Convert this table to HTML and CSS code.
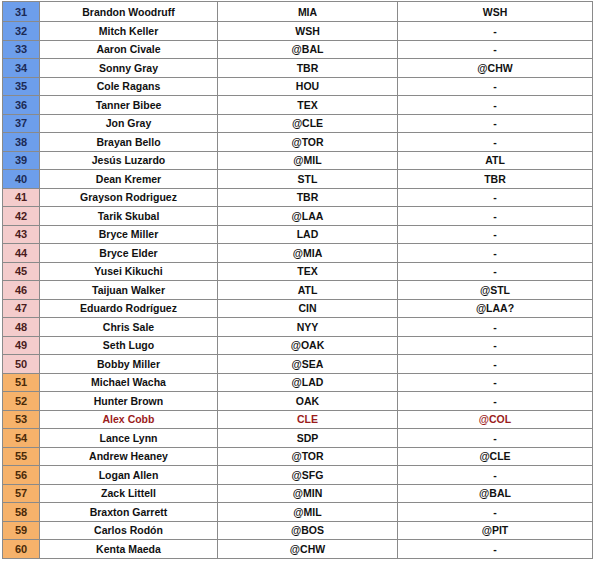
FILE: index.html
```html
<!DOCTYPE html>
<html>
<head>
<meta charset="utf-8">
<link rel="stylesheet" href="styles.css">
</head>
<body>
<table class="grid">
<colgroup><col class="c1"><col class="c2"><col class="c3"><col class="c4"></colgroup>
<tbody>
<tr class="first"><td class="n blue">31</td><td>Brandon Woodruff</td><td>MIA</td><td>WSH</td></tr>
<tr><td class="n blue">32</td><td>Mitch Keller</td><td>WSH</td><td>-</td></tr>
<tr><td class="n blue">33</td><td>Aaron Civale</td><td>@BAL</td><td>-</td></tr>
<tr><td class="n blue">34</td><td>Sonny Gray</td><td>TBR</td><td>@CHW</td></tr>
<tr><td class="n blue">35</td><td>Cole Ragans</td><td>HOU</td><td>-</td></tr>
<tr><td class="n blue">36</td><td>Tanner Bibee</td><td>TEX</td><td>-</td></tr>
<tr><td class="n blue">37</td><td>Jon Gray</td><td>@CLE</td><td>-</td></tr>
<tr><td class="n blue">38</td><td>Brayan Bello</td><td>@TOR</td><td>-</td></tr>
<tr><td class="n blue">39</td><td>Jesús Luzardo</td><td>@MIL</td><td>ATL</td></tr>
<tr><td class="n blue">40</td><td>Dean Kremer</td><td>STL</td><td>TBR</td></tr>
<tr><td class="n pink">41</td><td>Grayson Rodriguez</td><td>TBR</td><td>-</td></tr>
<tr><td class="n pink">42</td><td>Tarik Skubal</td><td>@LAA</td><td>-</td></tr>
<tr><td class="n pink">43</td><td>Bryce Miller</td><td>LAD</td><td>-</td></tr>
<tr><td class="n pink">44</td><td>Bryce Elder</td><td>@MIA</td><td>-</td></tr>
<tr><td class="n pink">45</td><td>Yusei Kikuchi</td><td>TEX</td><td>-</td></tr>
<tr><td class="n pink">46</td><td>Taijuan Walker</td><td>ATL</td><td>@STL</td></tr>
<tr><td class="n pink">47</td><td>Eduardo Rodríguez</td><td>CIN</td><td>@LAA?</td></tr>
<tr><td class="n pink">48</td><td>Chris Sale</td><td>NYY</td><td>-</td></tr>
<tr><td class="n pink">49</td><td>Seth Lugo</td><td>@OAK</td><td>-</td></tr>
<tr><td class="n pink">50</td><td>Bobby Miller</td><td>@SEA</td><td>-</td></tr>
<tr><td class="n orange">51</td><td>Michael Wacha</td><td>@LAD</td><td>-</td></tr>
<tr><td class="n orange">52</td><td>Hunter Brown</td><td>OAK</td><td>-</td></tr>
<tr class="red"><td class="n orange">53</td><td>Alex Cobb</td><td>CLE</td><td>@COL</td></tr>
<tr><td class="n orange">54</td><td>Lance Lynn</td><td>SDP</td><td>-</td></tr>
<tr><td class="n orange">55</td><td>Andrew Heaney</td><td>@TOR</td><td>@CLE</td></tr>
<tr><td class="n orange">56</td><td>Logan Allen</td><td>@SFG</td><td>-</td></tr>
<tr><td class="n orange">57</td><td>Zack Littell</td><td>@MIN</td><td>@BAL</td></tr>
<tr><td class="n orange">58</td><td>Braxton Garrett</td><td>@MIL</td><td>-</td></tr>
<tr><td class="n orange">59</td><td>Carlos Rodón</td><td>@BOS</td><td>@PIT</td></tr>
<tr><td class="n orange">60</td><td>Kenta Maeda</td><td>@CHW</td><td>-</td></tr>
</tbody>
</table>
</body>
</html>
```
FILE: styles.css
```css
html, body {
  margin: 0;
  padding: 0;
  background: #ffffff;
}
body {
  padding: 1px 0 0 2px;
}
.grid {
  border-collapse: collapse;
  table-layout: fixed;
  width: 590px;
  font-family: "Liberation Sans", Arial, sans-serif;
  font-weight: bold;
  font-size: 10.5px;
  color: #111111;
}
.c1 { width: 37px; }
.c2 { width: 178px; }
.c3 { width: 180px; }
.c4 { width: 195px; }
.grid td {
  border: 1px solid #8a8a8a;
  height: 17.5px;
  padding: 0;
  text-align: center;
  vertical-align: middle;
  line-height: 12px;
}
.grid tr.first td {
  height: 19px;
}
.grid td.n {
  font-size: 11px;
}
.blue { background: #6d9eeb; color: #1c2a55; }
.pink { background: #f4cccc; color: #4a1c1c; }
.orange { background: #f6b26b; color: #4a2a08; }
.grid tr.red td:not(.n) { color: #9b1c1c; }
```
